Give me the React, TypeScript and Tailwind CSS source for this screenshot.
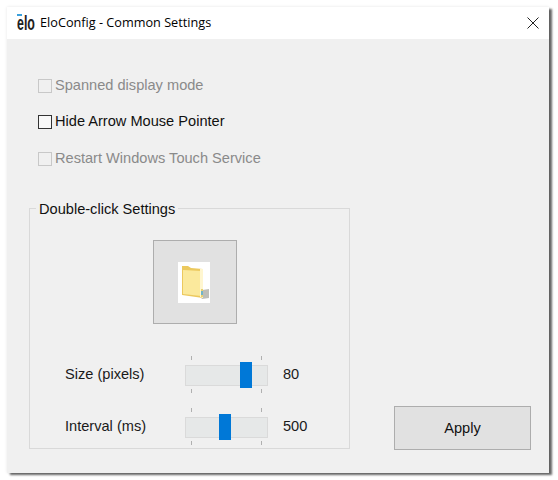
export default function App() {
  const body = { fontFamily: '"Liberation Sans", Arial, sans-serif' };
  const Check = ({ label, enabled }: { label: string; enabled?: boolean }) => (
    <div className={`flex items-center h-[14px] gap-[3px] text-[14.6px] ${enabled ? "text-[#111]" : "text-[#8a8a8a]"}`}>
      <div className={`w-[14px] h-[14px] border ${enabled ? "border-[#333] bg-[#f8f8f8]" : "border-[#c8c8c8] bg-[#f0f0f0]"}`} />
      <span className="whitespace-nowrap">{label}</span>
    </div>
  );
  const Slider = ({ label, value, thumb }: { label: string; value: string; thumb: string }) => (
    <div className="flex items-center h-[40px] text-[14.6px] text-[#1a1a1a]">
      <div className="w-[155px] pl-[35px] whitespace-nowrap">{label}</div>
      <div className="relative w-[83px] h-[21px] bg-[#e6e8e8] border border-[#dadada]">
        <div className="absolute left-[5px] top-[-10px] w-px h-[4px] bg-[#b0b0b0]" />
        <div className="absolute left-[75px] top-[-10px] w-px h-[4px] bg-[#b0b0b0]" />
        <div className="absolute left-[5px] top-[23px] w-px h-[4px] bg-[#b0b0b0]" />
        <div className="absolute left-[75px] top-[23px] w-px h-[4px] bg-[#b0b0b0]" />
        <div className={`absolute top-[-4px] w-[12px] h-[26px] bg-[#0078d7] ${thumb}`} />
      </div>
      <div className="ml-[15px]">{value}</div>
    </div>
  );
  return (
    <div className="w-[558px] h-[480px] bg-white pt-[7px] pl-[7px]" style={body}>
      <div className="w-[542px] h-[466px] flex flex-col shadow-[3px_2px_2px_rgba(0,0,0,0.6),0_0_3px_rgba(0,0,0,0.1)] bg-[#f0f0f0]">
        <div className="h-[32px] bg-white flex items-center pl-[10px] pr-[10px] shrink-0">
          <div className="relative w-[16px] h-[16px] mr-[7px]">
            <div className="absolute left-0 top-[-1px] w-[5px] h-[2px] bg-[#3aa0dc]" />
            <span className="absolute left-0 top-[-2px] text-[20px] leading-[20px] font-bold text-[#222] origin-top-left scale-x-[0.62]">elo</span>
          </div>
          <span className="text-[12.7px] text-black whitespace-nowrap" style={{ fontFamily: '"Open Sans", sans-serif' }}>EloConfig - Common Settings</span>
          <svg className="ml-auto" width="12" height="12" viewBox="0 0 12 12" fill="none" stroke="#222" strokeWidth="1">
            <path d="M0.5 0.5L11.5 11.5M11.5 0.5L0.5 11.5" />
          </svg>
        </div>
        <div className="flex-1 relative pl-[22px] pt-[40px]">
          <div className="flex flex-col gap-[22px] pl-[9px]">
            <Check label="Spanned display mode" />
            <Check label="Hide Arrow Mouse Pointer" enabled />
            <div className="mt-[1px]"><Check label="Restart Windows Touch Service" /></div>
          </div>
          <div className="relative mt-[42px] w-[321px] h-[241px] border border-[#d9d9d9] pt-[31px]">
            <div className="absolute left-[6px] top-[-9px] bg-[#f0f0f0] px-[3px] text-[14.6px] leading-[18px] text-[#111] whitespace-nowrap">Double-click Settings</div>
            <div className="flex justify-center pl-[11px]">
              <div className="w-[84px] h-[84px] bg-[#e1e1e1] border border-[#adadad] flex items-center justify-center pr-[2px]">
                <div className="w-[32px] h-[41px] bg-white flex items-center justify-center">
                  <svg width="32" height="41" viewBox="0 0 32 41">
                    <path d="M18 29 L31 27 L31 36 L24 37 Z" fill="#bdbdb8" />
                    <path d="M4 4 L10 4 L13 6 L25 7 L25 36 L4 33 Z" fill="#ecc95e" />
                    <path d="M5 8 L23 9 L23 34 L5 32 Z" fill="#fbe99c" />
                    <path d="M22 7 L25 7 L25 36 L22 35 Z" fill="#fff6d0" />
                    <rect x="23" y="27" width="2" height="8" fill="#e8d070" />
                    <rect x="23" y="29" width="2" height="4" fill="#6fb4c8" />
                  </svg>
                </div>
              </div>
            </div>
            <div className="mt-[31px] flex flex-col gap-[12px]">
              <Slider label="Size (pixels)" value="80" thumb="left-[54px]" />
              <Slider label="Interval (ms)" value="500" thumb="left-[33px]" />
            </div>
          </div>
          <button className="absolute left-[387px] top-[367px] w-[137px] h-[44px] pt-[2px] bg-[#e1e1e1] border border-[#adadad] text-[14.6px] text-[#111]">Apply</button>
        </div>
      </div>
    </div>
  );
}
